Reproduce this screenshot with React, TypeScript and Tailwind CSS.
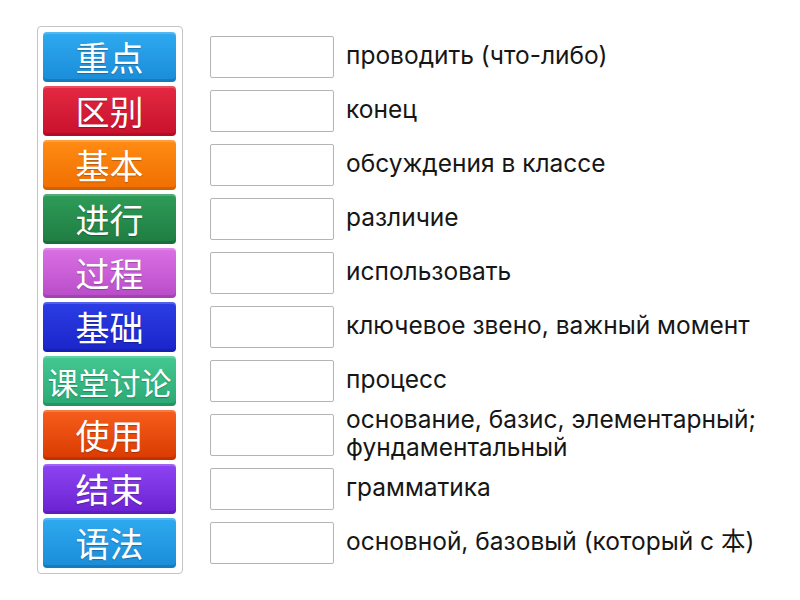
import React from 'react';

type Tile = { word: string; from: string; to: string; size: string };

const tiles: Tile[] = [
  { word: '重点', from: '#2eaaf0', to: '#1a8cd8', size: 'text-[34px]' },
  { word: '区别', from: '#e42a42', to: '#c8102c', size: 'text-[34px]' },
  { word: '基本', from: '#ff8c14', to: '#f06e00', size: 'text-[34px]' },
  { word: '进行', from: '#2f9c58', to: '#1e7c42', size: 'text-[34px]' },
  { word: '过程', from: '#da70e4', to: '#b84cc8', size: 'text-[34px]' },
  { word: '基础', from: '#2c3ee6', to: '#1a24c8', size: 'text-[34px]' },
  { word: '课堂讨论', from: '#44c892', to: '#2aa872', size: 'text-[31px]' },
  { word: '使用', from: '#f65e1c', to: '#da3a00', size: 'text-[34px]' },
  { word: '结束', from: '#8e44f2', to: '#6a22d0', size: 'text-[34px]' },
  { word: '语法', from: '#2eaaf0', to: '#1a8cd8', size: 'text-[34px]' },
];

const meanings = [
  'проводить (что-либо)',
  'конец',
  'обсуждения в классе',
  'различие',
  'использовать',
  'ключевое звено, важный момент',
  'процесс',
  'основание, базис, элементарный; фундаментальный',
  'грамматика',
  'основной, базовый (который с 本)',
];

function WordTile({ tile }: { tile: Tile }) {
  return (
    <div
      className={`h-[50px] w-[133px] rounded-[4px] flex items-center justify-center text-white leading-none shadow-[inset_0_2px_0_rgba(255,255,255,0.18),inset_0_-3px_0_rgba(0,0,0,0.12)] ${tile.size}`}
      style={{ background: `linear-gradient(${tile.from}, ${tile.to})` }}
    >
      <span className="font-['Noto_Sans_CJK_SC',sans-serif] [text-shadow:0_1px_1px_rgba(0,0,0,0.25)]">{tile.word}</span>
    </div>
  );
}

export default function App() {
  return (
    <div className="w-[800px] h-[600px] bg-white font-['Inter','Noto_Sans_CJK_SC',sans-serif] pt-[26px] pl-[37px] flex items-start">
      <div className="border border-[#c4c4c4] rounded-[4px] pt-[5px] pb-[5px] pl-[5px] pr-[6px] flex flex-col gap-[4px]">
        {tiles.map((t) => (
          <WordTile key={t.word} tile={t} />
        ))}
      </div>
      <div className="ml-[27px] mt-[6px] flex flex-col gap-[4px]">
        {meanings.map((m) => (
          <div key={m} className="h-[50px] flex items-center">
            <div className="w-[124px] h-[42px] border border-[#b4b4b4] rounded-[2px] bg-white shrink-0" />
            <div className="ml-[12px] text-[24.5px] leading-[28px] text-[#161616] w-[440px] -mt-[4px]">{m}</div>
          </div>
        ))}
      </div>
    </div>
  );
}
